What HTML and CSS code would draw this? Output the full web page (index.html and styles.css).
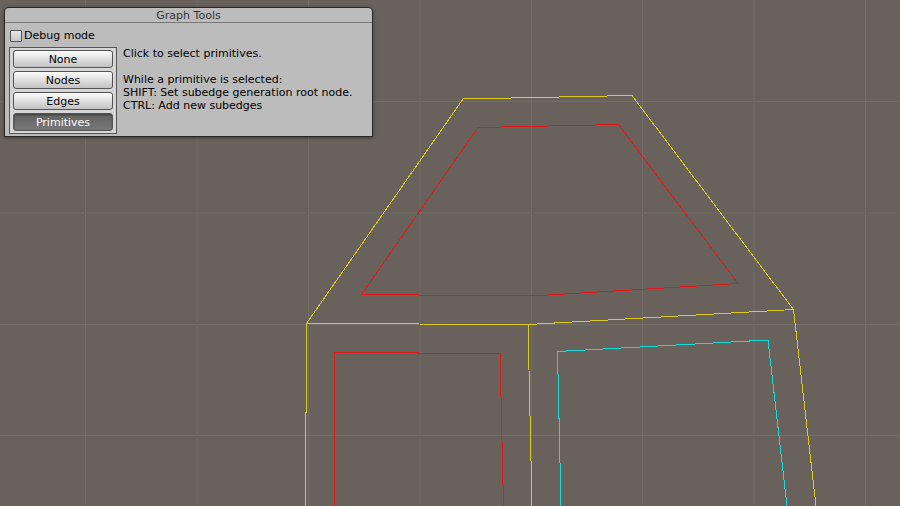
FILE: index.html
```html
<!DOCTYPE html>
<html lang="en">
<head>
    <meta charset="UTF-8">
    <meta name="viewport" content="width=device-width, initial-scale=1.0">
    <title>Graph Tools</title>
    <link rel="stylesheet" href="styles.css">
</head>
<body>
    <!-- Scene view (grid, edges and primitives) -->
    <svg class="scene" aria-hidden="true">
        <path class="grid" d="M85.5 0V2000M308.5 0V2000M531.5 0V2000M642.5 0V2000M865.5 0V2000M0 101.5H4000M0 324.5H4000M0 435.5H4000"/>
        <path class="grid wide" d="M197 0V2000M420 0V2000M754 0V2000M0 213H4000"/>

        <path class="edge" d="M306.5 323.5L463 99L632 95.5L793.5 309.5L528 324.5Z"/>
        <path class="edge" d="M306.5 323.5L305.5 506"/>
        <path class="edge" d="M528 324.5L532 506"/>
        <path class="edge" d="M793.5 309.5L816 506"/>

        <path class="primitive" d="M478 127.5L618.5 124.5L738 283.5L532 296L361.5 294.5Z"/>
        <path class="primitive" d="M334.5 506L335 352.5L500 353.5L503.5 506"/>
        <path class="primitive hovered" d="M561 506L557.5 351.5L768 340L787 506"/>
    </svg>

    <!-- Tool window -->
    <section class="window">
        <h1 class="window-title">Graph Tools</h1>
        <div class="window-body">
            <label class="toggle">
                <input type="checkbox">
                Debug mode
            </label>
            <div class="tools">
                <div class="modes">
                    <button type="button">None</button>
                    <button type="button">Nodes</button>
                    <button type="button">Edges</button>
                    <button type="button" class="active">Primitives</button>
                </div>
                <div class="help">
                    <p>Click to select primitives.</p>
                    <p>While a primitive is selected:<br>SHIFT: Set subedge generation root node.<br>CTRL: Add new subedges</p>
                </div>
            </div>
        </div>
    </section>

    <script>
        const buttons = document.querySelectorAll(".modes button");

        buttons.forEach((button) => {
            button.addEventListener("click", () => {
                buttons.forEach((b) => b.classList.remove("active"));
                button.classList.add("active");
            });
        });
    </script>
</body>
</html>
```
FILE: styles.css
```css
* {
    box-sizing: border-box;
}
body {
    margin: 0;
    padding: 8px 5px;
    min-height: 100vh;
    background-color: #69615b;
    color: #000;
    font-family: "DejaVu Sans", Verdana, sans-serif;
    font-size: 11px;
    line-height: 13px;
}

/* Scene */
.scene {
    position: absolute;
    top: 0;
    left: 0;
    width: 100%;
    height: 100%;
}
.scene path {
    fill: none;
    stroke-width: 1;
}
.scene .grid {
    stroke: #726e69;
}
.scene .wide {
    stroke: #6b675f;
    stroke-width: 2;
}
.scene .edge,
.scene .primitive {
    shape-rendering: crispEdges;
}
.scene .edge {
    stroke: #dbca20;
}
.scene .primitive {
    stroke: #e01a1a;
}
.scene .hovered {
    stroke: #1adada;
}

/* Tool window */
.window {
    position: relative;
    width: max-content;
    background-color: #bcbcbc;
    border-radius: 4px 4px 0 0;
    box-shadow: 0 0 0 1px #2b2927, 0 1px 4px rgba(0, 0, 0, 0.6);
}
.window-title {
    margin: 0;
    padding-top: 1px;
    border-bottom: 1px solid #777;
    color: #333;
    font-size: 11px;
    font-weight: normal;
    text-align: center;
}
.window-body {
    padding: 5px 7px 2px 4px;
}
.toggle {
    display: flex;
    align-items: center;
    gap: 2px;
    height: 15px;
}
.toggle input {
    appearance: none;
    width: 12px;
    height: 12px;
    margin: 0 0 0 1px;
    border: 1px solid #555;
    border-radius: 1px;
    background: linear-gradient(#e8e8e8, #c8c8c8);
}
.toggle input:checked {
    background: #555;
}
.tools {
    display: flex;
    gap: 6px;
    margin-top: 4px;
}
.modes {
    display: flex;
    flex-direction: column;
    gap: 3px;
    width: 108px;
    padding: 2px 3px;
    border: 1px solid #555;
    background-color: #d6d6d6;
}
.modes button {
    height: 18px;
    padding: 0;
    border: 1px solid #555;
    border-radius: 3px;
    background: linear-gradient(#fcfcfc, #c2c2c2);
    color: #000;
    font: inherit;
}
.modes .active {
    border-color: #555;
    background: linear-gradient(#626262, #787878);
    box-shadow: inset 0 1px 2px rgba(0, 0, 0, 0.4);
    color: #fff;
}
.help {
    min-width: 242px;
}
.help p {
    margin: 0 0 13px;
}
```
